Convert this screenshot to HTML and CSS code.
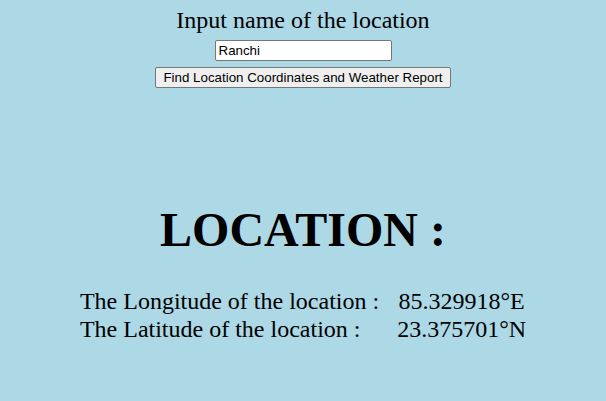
FILE: index.html
```html
<!DOCTYPE html>
<html>
<head>
<meta charset="utf-8">
<link rel="stylesheet" href="styles.css">
</head>
<body>
<div class="page">
  <div class="prompt">Input name of the location</div>
  <input class="loc-input" type="text" value="Ranchi">
  <button class="find-btn">Find Location Coordinates and Weather Report</button>
  <h1 class="heading">LOCATION :</h1>
  <div class="coords">
    <div class="label">The Longitude of the location :</div>
    <div class="value">85.329918°E</div>
    <div class="label">The Latitude of the location :</div>
    <div class="value">23.375701°N</div>
  </div>
</div>
</body>
</html>
```
FILE: styles.css
```css
html, body {
  margin: 0;
  padding: 0;
  background: #add8e6;
  font-family: "Liberation Serif", "Times New Roman", serif;
  color: #000;
}
.page {
  display: flex;
  flex-direction: column;
  align-items: center;
  padding-top: 6px;
}
.prompt {
  font-size: 24px;
  line-height: 28px;
}
.loc-input {
  margin-top: 6px;
  width: 177px;
  height: 21px;
  box-sizing: border-box;
  font-family: "Liberation Sans", Arial, sans-serif;
  font-size: 13.33px;
  padding: 1px 3px;
  border: 1px solid #767676;
  border-radius: 2px;
  background: #fff;
}
.find-btn {
  margin-top: 6px;
  height: 21px;
  box-sizing: border-box;
  font-family: "Liberation Sans", Arial, sans-serif;
  font-size: 13.33px;
  padding: 1px 7px;
  border: 1px solid #767676;
  border-radius: 2px;
  background: #efefef;
  color: #000;
}
.heading {
  font-size: 48px;
  font-weight: bold;
  margin: 114px 0 0;
  line-height: 55px;
}
.coords {
  margin-top: 30px;
  display: grid;
  grid-template-columns: auto auto;
  column-gap: 18px;
  font-size: 24px;
  line-height: 28px;
}
.value {
  text-align: center;
}
```
